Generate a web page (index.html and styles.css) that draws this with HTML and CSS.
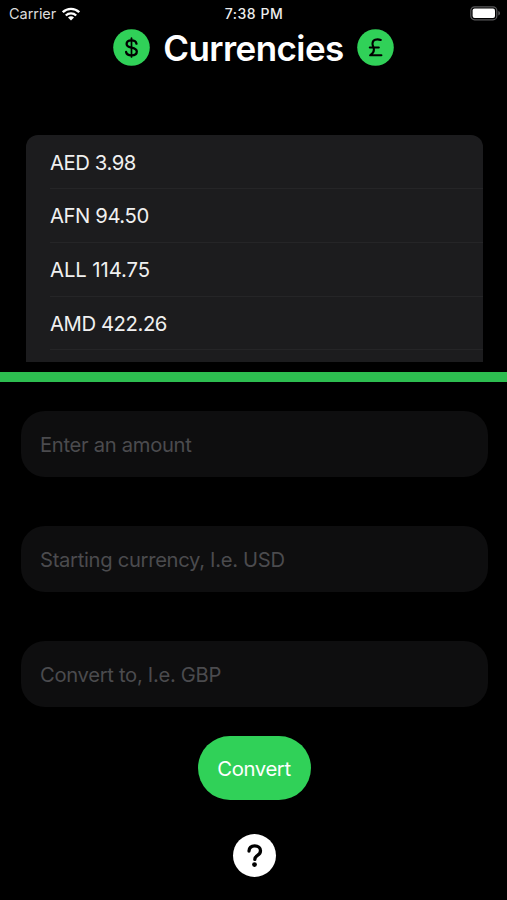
FILE: index.html
```html
<!DOCTYPE html>
<html lang="en">
<head>
<meta charset="utf-8">
<title>Currencies</title>
<link rel="stylesheet" href="styles.css">
</head>
<body>
<div class="screen">
  <div class="status">
    <div class="carrier"><span>Carrier</span>
      <svg class="wifi" viewBox="0 0 18 14" width="18" height="14"><g fill="none" stroke="#fff" stroke-width="2.3"><path d="M.8 5.2a11.6 11.6 0 0 1 16.4 0"/><path d="M3.8 8.5a7.4 7.4 0 0 1 10.4 0"/></g><path d="M9 13.6 6 10.6a4.2 4.2 0 0 1 6 0z" fill="#fff"/></svg>
    </div>
    <span class="time">7:38 PM</span>
    <svg class="battery" viewBox="0 0 31 15" width="31" height="15"><rect x=".8" y=".8" width="26" height="13" rx="3.8" fill="none" stroke="#59595b" stroke-width="1.2"/><rect x="2.6" y="2.6" width="22.4" height="9.4" rx="2" fill="#fff"/><path d="M28.3 5v4.6q1.7-.6 1.7-2.3T28.3 5" fill="#59595b"/></svg>
  </div>
  <header class="header">
    <svg class="coin" viewBox="0 0 37 37" role="img" aria-label="Dollar"><circle cx="18.5" cy="18.5" r="18.3" fill="#30d158"/><g fill="none" stroke="#000" stroke-linecap="round"><path d="M18.5 9.2v18.8" stroke-width="1.7"/><path d="M23.5 14.7c-.5-2.1-2.3-3.3-5-3.3-2.9 0-4.9 1.4-4.9 3.6 0 2 1.5 2.9 4.9 3.6 3.7.8 5.3 1.7 5.3 3.9 0 2.4-2.1 3.9-5.3 3.9-3.1 0-5-1.2-5.4-3.4" stroke-width="2.3"/></g></svg>
    <h1>Currencies</h1>
    <svg class="coin" viewBox="0 0 37 37" role="img" aria-label="Pound"><circle cx="18.5" cy="18.5" r="18.3" fill="#30d158"/><path d="M23.8 11c-4-1.5-8.3-.2-8.3 3.7 0 2.2 1.4 3.5 1.4 6.1 0 2.2-1.1 4-3.8 5.5h11.3M12.8 18.5h9" fill="none" stroke="#000" stroke-width="2.1" stroke-linecap="round" stroke-linejoin="round"/></svg>
  </header>
  <ul class="rates">
    <li><span>AED 3.98</span></li>
    <li><span>AFN 94.50</span></li>
    <li><span class="wide">ALL 114.75</span></li>
    <li><span>AMD 422.26</span></li>
  </ul>
  <div class="divider"></div>
  <form class="form">
    <input type="text" placeholder="Enter an amount">
    <input type="text" placeholder="Starting currency, I.e. USD">
    <input type="text" placeholder="Convert to, I.e. GBP">
    <button class="convert" type="button">Convert</button>
    <button class="help" type="button" aria-label="Help"><svg viewBox="0 0 43 43" width="43" height="43"><path d="M16 17c.2-3.4 2.3-5.2 5.7-5.2 3.5 0 5.8 2 5.8 4.9 0 2.2-1.1 3.5-3 4.7-1.9 1.2-2.7 2-2.7 4" fill="none" stroke="#000" stroke-width="3.3" stroke-linecap="round"/><circle cx="21.5" cy="30.6" r="2.4"/></svg></button>
  </form>
</div>
</body>
</html>
```
FILE: styles.css
```css
* { box-sizing: border-box; }
body {
  margin: 0;
  background: #000;
  color: #fff;
  font-family: Inter, "Liberation Sans", sans-serif;
}
.screen { height: 900px; overflow: hidden; }
.status {
  display: grid;
  grid-template-columns: 1fr auto 1fr;
  align-items: center;
  height: 27px;
  padding: 0 6px 0 9px;
  font-size: 14.5px;
}
.carrier { display: flex; align-items: center; gap: 6px; color: #dcdcdc; letter-spacing: -.05px; }
.time { font-weight: 500; font-size: 14px; letter-spacing: .55px; color: #eee; margin-left: -2px; }
.battery { justify-self: end; }
.header {
  display: flex;
  justify-content: center;
  align-items: center;
  height: 41px;
  gap: 13.5px;
}
h1 { margin: 0; font-size: 35px; font-weight: 600; line-height: 41px; letter-spacing: -.57px; padding-top: 1px; }
.coin { width: 37px; height: 37px; flex: none; }
.rates {
  list-style: none;
  margin: 67.3px 24.5px 0 25.5px;
  padding: 0;
  height: 226.4px;
  overflow: hidden;
  border-radius: 12px 12px 0 0;
  background: #1c1c1e;
}
.rates li {
  height: 53.75px;
  margin-left: 24.5px;
  border-bottom: 1px solid #252527;
  display: flex;
  align-items: center;
  padding-top: 1px;
  font-size: 20.3px;
  letter-spacing: -.43px;
  color: #f0f0f0;
}
.rates .wide { letter-spacing: -.08px; }
.divider { height: 9.5px; margin-top: 10.5px; background: #2dbd50; }
.form { display: flex; flex-direction: column; align-items: center; padding: 29.5px 19.5px 0 20.5px; }
input {
  width: 100%;
  height: 66px;
  margin-bottom: 49px;
  padding: 0 19.5px;
  border: 0;
  border-radius: 24px;
  background: #0e0e0f;
  color: #fff;
  font: 20.2px Inter, sans-serif;
  letter-spacing: -.3px;
}
input::placeholder { color: #4b4b4e; opacity: 1; }
.convert {
  width: 113px;
  height: 64px;
  margin-top: -20px;
  padding: 0;
  border: 0;
  border-radius: 32px;
  background: #30d158;
  color: #fff;
  font: 20.3px Inter, sans-serif;
  letter-spacing: -.4px;
}
.help {
  width: 43px;
  height: 43px;
  margin-top: 34px;
  padding: 0;
  border: 0;
  border-radius: 50%;
  background: #fff;
}
.help svg { display: block; }
```
